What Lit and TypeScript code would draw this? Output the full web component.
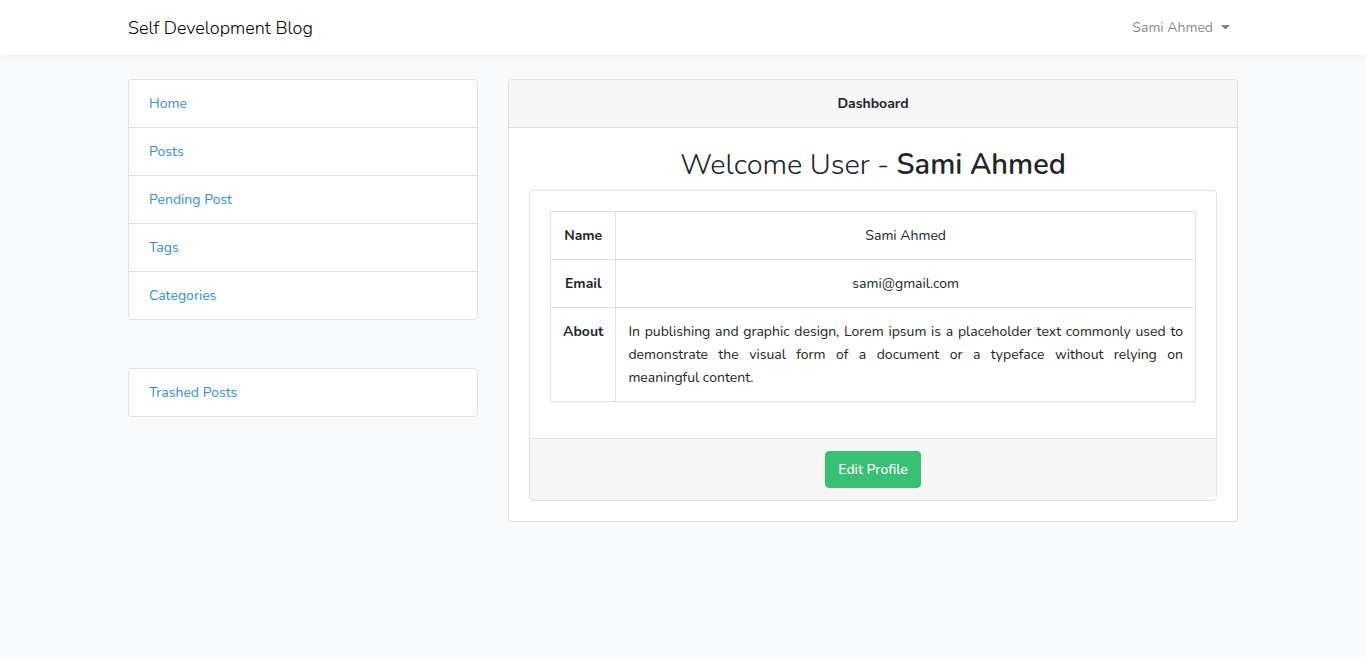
import { LitElement, html, css } from "lit";
import { customElement, property } from "lit/decorators.js";

interface NavLink {
  label: string;
  href: string;
}

@customElement("link-list")
class LinkList extends LitElement {
  @property({ attribute: false }) links: NavLink[] = [];

  static styles = css`
    :host {
      display: block;
    }
    .list {
      margin: 0;
      padding: 0;
      list-style: none;
      background: #fff;
      border: 1px solid #dfdfdf;
      border-radius: 4px;
    }
    .item {
      padding: 12px 20px;
    }
    .item + .item {
      border-top: 1px solid #dfdfdf;
    }
    .link {
      color: #3490dc;
      text-decoration: none;
    }
    .link:hover {
      text-decoration: underline;
    }
  `;

  render() {
    return html`
      <ul class="list">
        ${this.links.map(
          (link) => html`<li class="item"><a class="link" href=${link.href}>${link.label}</a></li>`
        )}
      </ul>
    `;
  }
}

@customElement("app-root")
class AppRoot extends LitElement {
  private mainLinks: NavLink[] = [
    { label: "Home", href: "#home" },
    { label: "Posts", href: "#posts" },
    { label: "Pending Post", href: "#pending" },
    { label: "Tags", href: "#tags" },
    { label: "Categories", href: "#categories" },
  ];

  private trashLinks: NavLink[] = [{ label: "Trashed Posts", href: "#trashed" }];

  static styles = css`
    :host {
      display: block;
      min-height: 100vh;
      background: #f8fafc;
      color: #212529;
      font-family: Nunito, Lato, sans-serif;
      font-size: 14px;
      font-weight: 400;
      line-height: 23px;
    }
    *,
    *::before,
    *::after {
      box-sizing: border-box;
    }
    .navbar {
      background: #fff;
      box-shadow: 0 2px 4px rgba(0, 0, 0, 0.04);
    }
    .container {
      max-width: 1140px;
      margin: 0 auto;
      padding: 0 15px;
    }
    .bar {
      display: flex;
      align-items: center;
      justify-content: space-between;
      min-height: 55px;
    }
    .brand {
      font-size: 18px;
      font-weight: 300;
      line-height: 28px;
      color: #000;
      text-decoration: none;
    }
    .user {
      display: flex;
      align-items: center;
      gap: 8px;
      padding: 8px;
      border: 0;
      background: none;
      color: rgba(0, 0, 0, 0.5);
      font: inherit;
      cursor: pointer;
    }
    .caret {
      width: 9px;
      height: 5px;
      fill: currentColor;
    }
    .content {
      display: grid;
      grid-template-columns: minmax(0, 350fr) minmax(0, 730fr);
      gap: 30px;
      align-items: start;
      padding-top: 24px;
      padding-bottom: 24px;
    }
    .sidebar {
      display: grid;
      gap: 48px;
    }
    .card {
      background: #fff;
      border: 1px solid #dfdfdf;
      border-radius: 4px;
      text-align: center;
    }
    .card-header {
      margin: 0;
      padding: 12px 20px;
      background: #f7f7f7;
      border-bottom: 1px solid #dfdfdf;
      border-radius: 3px 3px 0 0;
      font-size: 14px;
      font-weight: 700;
    }
    .card-body {
      padding: 20px;
    }
    .card-footer {
      padding: 12px 20px;
      background: #f7f7f7;
      border-top: 1px solid #dfdfdf;
      border-radius: 0 0 3px 3px;
    }
    .welcome {
      margin: 0 0 8px;
      font-size: 29px;
      font-weight: 300;
      line-height: 34px;
    }
    .welcome-name {
      font-weight: 600;
    }
    .profile {
      width: 100%;
      margin-bottom: 16px;
      border-collapse: collapse;
    }
    .profile th,
    .profile td {
      padding: 12px;
      border: 1px solid #dee2e6;
      vertical-align: top;
    }
    .profile th {
      width: 65px;
      font-weight: 700;
    }
    .profile .about {
      text-align: justify;
    }
    .keep-together {
      white-space: nowrap;
    }
    .button {
      display: inline-block;
      padding: 6px 12px;
      border: 1px solid #38c172;
      border-radius: 4px;
      background: #38c172;
      color: #fff;
      font: inherit;
      font-weight: 500;
      vertical-align: top;
      cursor: pointer;
    }
  `;

  render() {
    return html`
      <nav class="navbar">
        <div class="container bar">
          <a class="brand" href="#home">Self Development Blog</a>
          <button class="user" type="button" aria-haspopup="true">
            Sami Ahmed
            <svg class="caret" viewBox="0 0 9 5" aria-hidden="true"><path d="M0 0h9L4.500 4.500z" /></svg>
          </button>
        </div>
      </nav>
      <main class="container content">
        <aside class="sidebar">
          <link-list .links=${this.mainLinks}></link-list>
          <link-list .links=${this.trashLinks}></link-list>
        </aside>
        <section class="card">
          <h1 class="card-header">Dashboard</h1>
          <div class="card-body">
            <h2 class="welcome">Welcome User - <strong class="welcome-name">Sami Ahmed</strong></h2>
            <div class="card">
              <div class="card-body">
                <table class="profile">
                  <tbody>
                    <tr>
                      <th scope="row">Name</th>
                      <td>Sami Ahmed</td>
                    </tr>
                    <tr>
                      <th scope="row">Email</th>
                      <td>sami@gmail.com</td>
                    </tr>
                    <tr>
                      <th scope="row">About</th>
                      <td class="about">
                        In publishing and graphic design, Lorem ipsum is a placeholder text commonly used to
                        demonstrate the visual form of a document or a typeface without relying on
                        <span class="keep-together">meaningful content.</span>
                      </td>
                    </tr>
                  </tbody>
                </table>
              </div>
              <div class="card-footer">
                <button class="button" type="button">Edit Profile</button>
              </div>
            </div>
          </div>
        </section>
      </main>
    `;
  }
}
